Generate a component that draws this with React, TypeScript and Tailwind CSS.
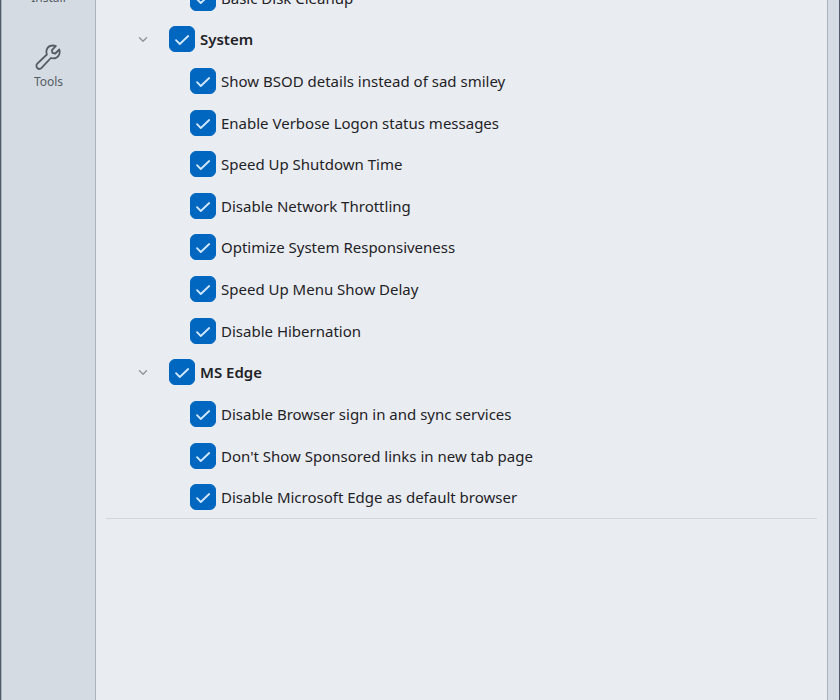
import React, { useState } from 'react';

interface Tweak {
  id: string;
  label: string;
}

interface TweakGroup {
  id: string;
  label: string;
  items: Tweak[];
}

const groups: TweakGroup[] = [
  {
    id: 'system',
    label: 'System',
    items: [
      { id: 'bsod', label: 'Show BSOD details instead of sad smiley' },
      { id: 'verbose', label: 'Enable Verbose Logon status messages' },
      { id: 'shutdown', label: 'Speed Up Shutdown Time' },
      { id: 'throttling', label: 'Disable Network Throttling' },
      { id: 'responsive', label: 'Optimize System Responsiveness' },
      { id: 'menu', label: 'Speed Up Menu Show Delay' },
      { id: 'hibernation', label: 'Disable Hibernation' },
    ],
  },
  {
    id: 'edge',
    label: 'MS Edge',
    items: [
      { id: 'signin', label: 'Disable Browser sign in and sync services' },
      { id: 'sponsored', label: "Don't Show Sponsored links in new tab page" },
      { id: 'default', label: 'Disable Microsoft Edge as default browser' },
    ],
  },
];

const allIds = ['cleanup', ...groups.flatMap((g) => g.items.map((i) => i.id))];

interface CheckProps {
  label: string;
  checked: boolean;
  bold?: boolean;
  onChange: (checked: boolean) => void;
}

function Check({ label, checked, bold, onChange }: CheckProps) {
  return (
    <label className="flex items-center gap-[5px]">
      <span className="relative h-[26px] w-[26px] shrink-0">
        <input
          type="checkbox"
          checked={checked}
          onChange={(e) => onChange(e.target.checked)}
          className="block h-full w-full appearance-none rounded-[6px] border border-[#8a9099] bg-white checked:border-[#0067c0] checked:bg-[#0067c0]"
        />
        {checked && (
          <svg viewBox="0 0 26 26" fill="none" className="pointer-events-none absolute inset-0">
            <path d="M7 14.200l3.800 3.800 8.400-8" stroke="#d3e9fb" strokeWidth="1.800" strokeLinecap="round" strokeLinejoin="round" />
          </svg>
        )}
      </span>
      <span className={bold ? 'font-semibold' : ''}>{label}</span>
    </label>
  );
}

export default function App() {
  const [checked, setChecked] = useState<string[]>(allIds);
  const [closed, setClosed] = useState<string[]>([]);

  const setMany = (ids: string[], on: boolean) => {
    setChecked((prev) => {
      const rest = prev.filter((id) => !ids.includes(id));
      return on ? [...rest, ...ids] : rest;
    });
  };

  const toggleGroup = (id: string) => {
    setClosed((prev) => (prev.includes(id) ? prev.filter((c) => c !== id) : [...prev, id]));
  };

  return (
    <div className="flex h-screen overflow-hidden border-x border-[#505a66] bg-[#d4dbe3] pr-[11px] font-['Noto_Sans','Open_Sans',sans-serif] text-[15px] leading-5 text-[#1f2226]">
      <nav className="flex w-[94px] shrink-0 flex-col items-center border-l border-[#a9b2bd] text-[12px] leading-4 text-[#565c64]">
        <button type="button" className="-mt-[10px]">Install</button>
        <button type="button" className="mt-[38px] flex flex-col items-center gap-1">
          <svg viewBox="0 0 26 26" fill="none" className="h-[26px] w-[26px]">
            <path
              d="M17.800 1.500c1.200 0 2.200.2 3 .6l-3.900 4 .5 2.800 2.900.6 4-4c1.400 4.700-1.300 8.900-6.100 8.900-.9 0-1.700-.1-2.400-.4l-9.200 9.900c-1.200 1.200-3.100 1.300-4.300.1s-1.200-3.100 0-4.300l9.600-9.200C10.300 6 12.800 1.500 17.800 1.500z"
              stroke="currentColor"
              strokeWidth="1.800"
              strokeLinejoin="round"
            />
          </svg>
          <span>Tools</span>
        </button>
      </nav>

      <main className="min-w-0 flex-1 overflow-hidden border-x border-[#a9b2bd] bg-[#e9edf2] px-[10px]">
        {/* list is scrolled, the first row is partly out of view */}
        <div className="-mt-[23px] grid h-[542px] auto-rows-fr border-b border-[#d3d6dc]">
          <div className="flex items-center pl-[84px]">
            <Check label="Basic Disk Cleanup" checked={checked.includes('cleanup')} onChange={(on) => setMany(['cleanup'], on)} />
          </div>
          {groups.map((group) => {
            const ids = group.items.map((i) => i.id);
            const open = !closed.includes(group.id);
            return (
              <React.Fragment key={group.id}>
                <div className="flex items-center gap-5 pl-[31px]">
                  <button type="button" aria-label={`Toggle ${group.label}`} aria-expanded={open} onClick={() => toggleGroup(group.id)}>
                    <svg viewBox="0 0 12 12" fill="none" className={open ? 'h-3 w-3' : 'h-3 w-3 -rotate-90'}>
                      <path d="M2.500 4.800l3.500 3.400 3.500-3.400" stroke="#90959c" strokeWidth="1.400" strokeLinecap="round" strokeLinejoin="round" />
                    </svg>
                  </button>
                  <Check bold label={group.label} checked={ids.every((id) => checked.includes(id))} onChange={(on) => setMany(ids, on)} />
                </div>
                {open &&
                  group.items.map((item) => (
                    <div key={item.id} className="flex items-center pl-[84px]">
                      <Check label={item.label} checked={checked.includes(item.id)} onChange={(on) => setMany([item.id], on)} />
                    </div>
                  ))}
              </React.Fragment>
            );
          })}
        </div>
      </main>
    </div>
  );
}
